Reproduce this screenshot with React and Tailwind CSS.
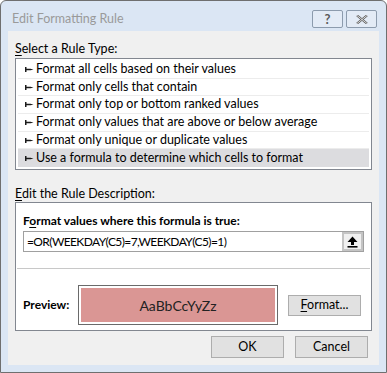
const rules = [
  'Format all cells based on their values',
  'Format only cells that contain',
  'Format only top or bottom ranked values',
  'Format only values that are above or below average',
  'Format only unique or duplicate values',
  'Use a formula to determine which cells to format',
]

function RuleArrow() {
  return (
    <svg width="9" height="5" viewBox="0 0 9 5" className="shrink-0">
      <rect x="0" y="0" width="1.5" height="5" fill="#1a1a1a" />
      <path d="M1 1.8 H5.5 L8.5 2.5 L5.5 3.2 H1 Z" fill="#1a1a1a" />
    </svg>
  )
}

function RefEditIcon() {
  return (
    <svg width="11" height="12" viewBox="0 0 11 12">
      <path d="M5.5 0.5 L10.5 6 H7 V9 H4 V6 H0.5 Z" fill="#000" />
      <rect x="0.5" y="10" width="10" height="1.6" fill="#000" />
    </svg>
  )
}

function Btn({ children, className = '' }) {
  return (
    <div className={`flex items-center justify-center border border-[#adadad] bg-[#e1e1e1] ${className}`}>
      {children}
    </div>
  )
}

export default function App() {
  return (
    <div
      className="w-[387px] h-[373px] flex flex-col border border-[#6f6f6f] rounded-t-[6px] bg-[#dbe6f4] text-[12.5px] text-black overflow-hidden"
      style={{ fontFamily: 'Lato, "Segoe UI", sans-serif' }}
    >
      {/* Title bar */}
      <div className="h-[30px] flex items-start shrink-0">
        <div className="pl-[11px] pt-[9px] text-[12.5px] text-[#9a9a9a] flex-1">Edit Formatting Rule</div>
        <div className="flex gap-[3px] pt-[9px] pr-[9px]">
          <div className="w-[31px] h-[18px] border border-[#8c9bad] rounded-[2px] bg-[#e3ebf6] flex items-center justify-center text-[13px] font-bold text-[#5a5a5a] leading-none">?</div>
          <div className="w-[31px] h-[18px] border border-[#8c9bad] rounded-[2px] bg-[#e3ebf6] flex items-center justify-center">
            <svg width="12" height="9" viewBox="0 0 12 9">
              <path d="M1 0.5 L11 8.5 M11 0.5 L1 8.5" stroke="#5a5a5a" strokeWidth="2.2" />
              <path d="M1 0.5 L11 8.5 M11 0.5 L1 8.5" stroke="#f4f4f4" strokeWidth="0.8" />
            </svg>
          </div>
        </div>
      </div>

      {/* Client area */}
      <div className="mx-[7px] h-[334px] bg-[#f0f0f0] flex flex-col px-[7px]">
        <div className="pt-[10px] h-[27px] leading-[16px]">
          <span className="underline underline-offset-2">S</span>elect a Rule Type:
        </div>
        <div className="h-[112px] border border-[#828790] bg-white p-[2px] flex flex-col">
          {rules.map((r, i) => (
            <div
              key={r}
              className={`h-[18px] flex items-center gap-[2px] pl-[7px] ${i === rules.length - 1 ? 'bg-[#dcdcdf]' : 'border-b border-[#ececec]'}`}
            >
              <RuleArrow />
              <span className="leading-none">{r}</span>
            </div>
          ))}
        </div>

        <div className="pt-[16px] h-[32px] leading-[16px]">
          <span className="underline underline-offset-2">E</span>dit the Rule Description:
        </div>
        <div className="h-[129px] border border-[#828790] bg-white flex flex-col px-[7px]">
          <div className="pt-[10px] h-[28px] font-bold leading-[16px] text-[12px]">
            F<span className="underline underline-offset-2">o</span>rmat values where this formula is true:
          </div>
          <div className="h-[21px] border border-[#a0a0a0] flex items-center">
            <div className="flex-1 pl-[3px] leading-none text-[12px] tracking-[-0.6px]">=OR(WEEKDAY(C5)=7,WEEKDAY(C5)=1)</div>
            <div className="w-[21px] h-[19px] border-2 border-[#c4c4c4] bg-[#f0f0f0] flex items-center justify-center">
              <RefEditIcon />
            </div>
          </div>
          <div className="mt-[16px] -mx-[6px] border-t border-[#c8c8c8]" />
          <div className="flex items-center mt-[16px]">
            <div className="w-[55px] font-bold text-[12px]">Preview:</div>
            <div className="w-[200px] h-[40px] border border-[#6a6a6a] p-[2px]">
              <div className="w-full h-full bg-[#da9694] flex items-center justify-center text-[14px] text-[#222]">AaBbCcYyZz</div>
            </div>
            <Btn className="ml-[10px] w-[73px] h-[21px]">
              <span><span className="underline underline-offset-2">F</span>ormat...</span>
            </Btn>
          </div>
        </div>

        <div className="flex justify-end gap-[11px] pt-[5px] pr-[4px]">
          <Btn className="w-[73px] h-[22px]">OK</Btn>
          <Btn className="w-[73px] h-[22px]">Cancel</Btn>
        </div>
      </div>
    </div>
  )
}
